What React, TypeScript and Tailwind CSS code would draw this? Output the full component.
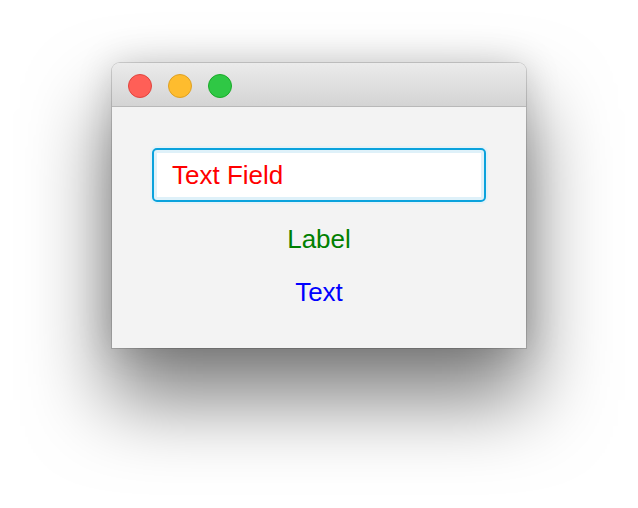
export default function App() {
	return (
		<div
			className="flex h-[508px] w-[638px] justify-center bg-white pt-[63px]"
			style={{ fontFamily: '"Liberation Sans", Arial, sans-serif' }}
		>
			<div className="flex h-[285px] w-[414px] flex-col overflow-hidden rounded-t-[8px] bg-[#f3f3f3] shadow-[0_48px_80px_4px_rgba(0,0,0,0.5),0_0_36px_rgba(0,0,0,0.16),0_0_0_1px_rgba(0,0,0,0.14)]">
				<div className="flex h-[44px] shrink-0 items-start gap-4 border-b border-[#b8b8b8] bg-gradient-to-b from-[#ebebeb] to-[#d4d4d4] pl-4 pt-[11px]">
					<span className="h-6 w-6 rounded-full border border-[#e0443e] bg-[#ff5f57]" />
					<span className="h-6 w-6 rounded-full border border-[#dea123] bg-[#febc2e]" />
					<span className="h-6 w-6 rounded-full border border-[#1aab29] bg-[#2fc845]" />
				</div>

				<div className="flex flex-col items-center px-10 pt-[41px]">
					<div className="flex h-[54px] w-full items-center rounded-[5px] border-2 border-[#0aa2dc] bg-white pl-[18px] shadow-[inset_0_0_0_3px_#dff1f9,0_0_0_2px_#e4f2f8]">
						<span className="text-[26px] leading-[30px] text-[#ff0000]">
							Text Field
						</span>
					</div>
					<span className="mt-[22px] text-[26px] leading-[30px] text-[#008000]">
						Label
					</span>
					<span className="mt-[23px] text-[26px] leading-[30px] text-[#0000ff]">
						Text
					</span>
				</div>
			</div>
		</div>
	);
}
